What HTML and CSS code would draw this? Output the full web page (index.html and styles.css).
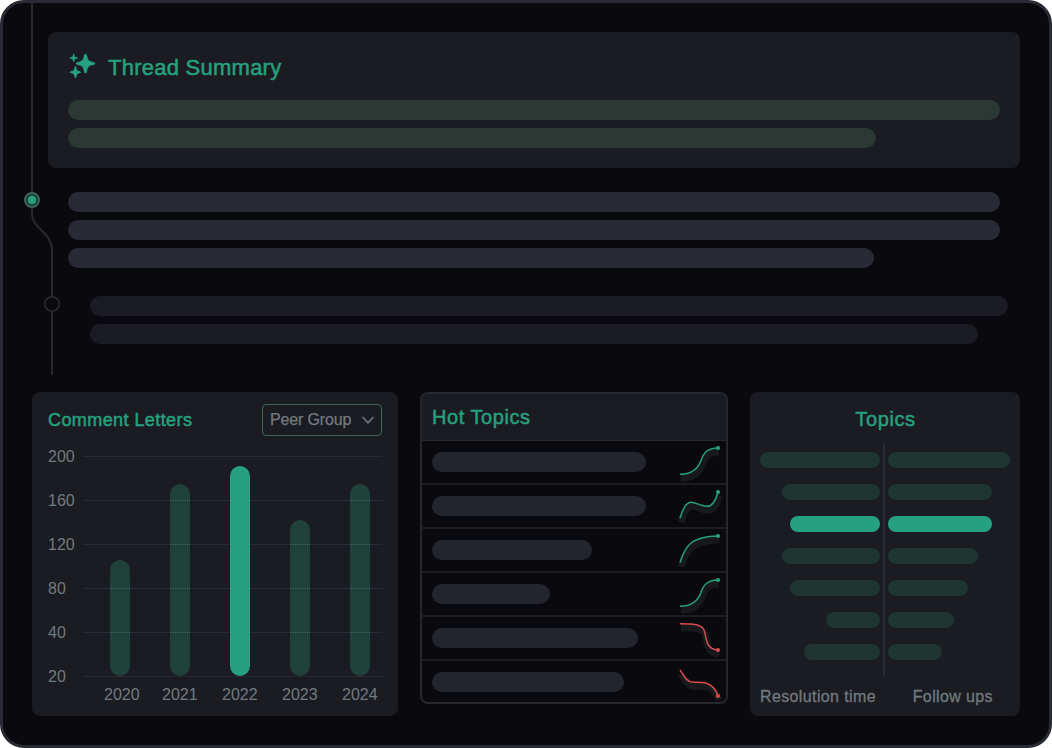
FILE: index.html
```html
<!DOCTYPE html>
<html lang="en">
  <head>
    <meta charset="UTF-8">
    <meta name="viewport" content="width=device-width, initial-scale=1.0">
    <title>Thread Summary</title>
    <link rel="stylesheet" href="styles.css">
  </head>
  <body>
    <div class="frame">
      <!-- timeline running down the left of the thread -->
      <svg class="rail" width="40" height="373" viewBox="21 3 40 373">
        <path class="rail-line" d="M32 3V214C32 229 52 232 52 250V375"/>
        <circle class="node-ring" cx="32" cy="200" r="7"/>
        <circle class="node-dot" cx="32" cy="200" r="4.2"/>
        <circle class="node-empty" cx="52" cy="304" r="7.2"/>
      </svg>

      <section class="summary">
        <h1>
          <svg class="sparkles" width="28" height="28" viewBox="0 0 28 28">
            <path d="M17.5 2C18.3 2 18.7 2.8 18.9 3.8C19.6 7.6 20.4 9 24 9.9C25.6 10.2 27 10.6 27 11.5C27 12.4 25.6 12.8 24 13.1C20.4 14 19.6 15.4 18.9 19.2C18.7 20.2 18.3 21 17.5 21C16.7 21 16.3 20.2 16.1 19.2C15.4 15.4 14.6 14 11 13.1C9.4 12.8 8 12.4 8 11.5C8 10.6 9.4 10.2 11 9.9C14.6 9 15.4 7.6 16.1 3.8C16.3 2.8 16.7 2 17.5 2Z"/>
            <path d="M5.7 1.7C6.4 1.7 6.2 4.4 6.9 4.9C7.4 5.4 9.8 5.2 9.8 5.9C9.8 6.6 7.4 6.4 6.9 6.9C6.2 7.5 6.4 9.8 5.7 9.8C5 9.8 5.2 7.5 4.5 6.9C4 6.4 1.8 6.6 1.8 5.9C1.8 5.2 4 5.4 4.5 4.9C5.2 4.4 5 1.7 5.7 1.7Z"/>
            <path d="M7.5 14.3C8.5 14.3 8.3 17.6 9.3 18.5C10.2 19.4 13 19.3 13 20.2C13 21.1 10.2 21 9.3 21.9C8.3 22.8 8.5 26 7.5 26C6.5 26 6.7 22.8 5.7 21.9C4.8 21 1.8 21.1 1.8 20.2C1.8 19.3 4.8 19.4 5.7 18.5C6.7 17.6 6.5 14.3 7.5 14.3Z"/>
          </svg>
          <span>Thread Summary</span>
        </h1>
        <div class="line w-932"></div>
        <div class="line w-808"></div>
      </section>

      <section class="post">
        <div class="line w-932"></div>
        <div class="line w-932"></div>
        <div class="line w-806"></div>
      </section>

      <section class="post reply">
        <div class="line w-918"></div>
        <div class="line w-888"></div>
      </section>

      <div class="panels">
        <section class="panel letters">
          <header>
            <h2>Comment Letters</h2>
            <button class="select" type="button">
              <span>Peer Group</span>
              <svg width="14" height="8" viewBox="0 0 14 8"><path d="M1.5 1L7 6.8L12.5 1"/></svg>
            </button>
          </header>
          <div class="chart">
            <div class="y-axis">
              <span>200</span><span>160</span><span>120</span><span>80</span><span>40</span><span>20</span>
            </div>
            <div class="plot">
              <div class="bar" style="height: 116px"></div>
              <div class="bar" style="height: 192px"></div>
              <div class="bar active" style="height: 210px"></div>
              <div class="bar" style="height: 156px"></div>
              <div class="bar" style="height: 192px"></div>
            </div>
          </div>
          <div class="x-axis">
            <span>2020</span><span>2021</span><span>2022</span><span>2023</span><span>2024</span>
          </div>
        </section>

        <section class="hot">
          <h2>Hot Topics</h2>
          <div class="row">
            <div class="line w-214"></div>
            <svg class="spark" width="50" height="42"><path class="glow" d="M4 34.3C15 34.3 21.5 30 25 20.5C27.5 13 31 8.2 42 8"/><path d="M4 34.3C15 34.3 21.5 30 25 20.5C27.5 13 31 8.2 42 8"/><circle cx="42" cy="8" r="2.1"/></svg>
          </div>
          <div class="row">
            <div class="line w-214"></div>
            <svg class="spark" width="50" height="42"><path class="glow" d="M4 34.3C7 24 10 18.3 15 18.3C20 18.3 25 22.3 31 22.3C36 22.3 40 16 42 8"/><path d="M4 34.3C7 24 10 18.3 15 18.3C20 18.3 25 22.3 31 22.3C36 22.3 40 16 42 8"/><circle cx="42" cy="8" r="2.1"/></svg>
          </div>
          <div class="row">
            <div class="line w-160"></div>
            <svg class="spark" width="50" height="42"><path class="glow" d="M4 34.7C9 18 15 8.5 42 8"/><path d="M4 34.7C9 18 15 8.5 42 8"/><circle cx="42" cy="8" r="2.1"/></svg>
          </div>
          <div class="row">
            <div class="line w-118"></div>
            <svg class="spark" width="50" height="42"><path class="glow" d="M4 34.3C15 34.3 21.5 30 25 20.5C27.5 13 31 8.2 42 8"/><path d="M4 34.3C15 34.3 21.5 30 25 20.5C27.5 13 31 8.2 42 8"/><circle cx="42" cy="8" r="2.1"/></svg>
          </div>
          <div class="row">
            <div class="line w-206"></div>
            <svg class="spark down" width="50" height="42"><path class="glow" d="M4 7.8C18 7.8 25 8.5 27.5 13C31 19 28 33.5 42 34"/><path d="M4 7.8C18 7.8 25 8.5 27.5 13C31 19 28 33.5 42 34"/><circle cx="42" cy="34" r="2.1"/></svg>
          </div>
          <div class="row">
            <div class="line w-192"></div>
            <svg class="spark down" width="50" height="42"><path class="glow" d="M4 10C8 16 11 22.3 17 22.3C22 22.5 25 22 30 23C36 25 40 30 42 36"/><path d="M4 10C8 16 11 22.3 17 22.3C22 22.5 25 22 30 23C36 25 40 30 42 36"/><circle cx="42" cy="36" r="2.1"/></svg>
          </div>
        </section>

        <section class="panel topics">
          <h2>Topics</h2>
          <div class="compare">
            <div class="side left">
              <div style="width: 120px"></div>
              <div style="width: 98px"></div>
              <div class="active" style="width: 90px"></div>
              <div style="width: 98px"></div>
              <div style="width: 90px"></div>
              <div style="width: 54px"></div>
              <div style="width: 76px"></div>
            </div>
            <div class="axis"></div>
            <div class="side">
              <div style="width: 122px"></div>
              <div style="width: 104px"></div>
              <div class="active" style="width: 104px"></div>
              <div style="width: 90px"></div>
              <div style="width: 80px"></div>
              <div style="width: 66px"></div>
              <div style="width: 54px"></div>
            </div>
          </div>
          <footer>
            <span>Resolution time</span>
            <span>Follow ups</span>
          </footer>
        </section>
      </div>
    </div>
  </body>
</html>
```
FILE: styles.css
```css
:root {
    --bg: #0a090e;
    --panel: #1b1c21;
    --border: #282b33;
    --green: #26a17f;
    --muted: #717a80;
}
* {
    box-sizing: border-box;
}
body {
    margin: 0;
    background: #fff;
    font-family: "Liberation Sans", Arial, sans-serif;
    font-size: 16px;
}
h1, h2 {
    margin: 0;
    color: var(--green);
    font-weight: normal;
    -webkit-text-stroke: 0.5px var(--green);
}
.frame {
    position: relative;
    width: 1052px;
    height: 748px;
    padding: 29px;
    background: var(--bg);
    border: 3px solid var(--border);
    border-radius: 24px;
}

/* timeline */
.rail {
    position: absolute;
    left: 18px;
    top: 0;
}
.rail-line {
    fill: none;
    stroke: #282930;
    stroke-width: 2;
}
.node-ring {
    fill: #1f3b35;
    stroke: #3b6458;
    stroke-width: 2;
}
.node-dot {
    fill: var(--green);
}
.node-empty {
    fill: var(--bg);
    stroke: #282930;
    stroke-width: 1.7;
}

/* thread */
.line {
    height: 20px;
    border-radius: 10px;
    background: #282b33;
}
.line + .line {
    margin-top: 8px;
}
.summary {
    height: 136px;
    margin-left: 16px;
    padding: 20px;
    background: var(--panel);
    border-radius: 8px;
}
.summary h1 {
    display: flex;
    align-items: center;
    gap: 12px;
    height: 32px;
    margin-bottom: 16px;
    font-size: 22px;
    line-height: 32px;
    letter-spacing: 0.25px;
}
.sparkles {
    margin-top: -4px;
    fill: var(--green);
    stroke: var(--green);
    stroke-width: 0.4;
}
.summary .line {
    background: #2b3833;
}
.post {
    margin: 24px 0 0 36px;
}
.reply {
    margin: 28px 0 0 58px;
}
.reply .line {
    background: #1b1b23;
}
.w-932 { width: 932px; }
.w-918 { width: 918px; }
.w-888 { width: 888px; }
.w-808 { width: 808px; }
.w-806 { width: 806px; }
.w-214 { width: 214px; }
.w-206 { width: 206px; }
.w-192 { width: 192px; }
.w-160 { width: 160px; }
.w-118 { width: 118px; }

/* bottom panels */
.panels {
    display: grid;
    grid-template-columns: 366px 308px 270px;
    align-items: start;
    gap: 22px;
    margin-top: 48px;
}
.panel {
    height: 324px;
    background: var(--panel);
    border-radius: 8px;
}

/* comment letters */
.letters {
    padding: 12px 16px;
}
.letters header {
    display: flex;
    align-items: center;
    justify-content: space-between;
    height: 32px;
}
.letters h2 {
    font-size: 18px;
    letter-spacing: 0.42px;
}
.select {
    display: flex;
    align-items: center;
    justify-content: space-between;
    width: 120px;
    height: 32px;
    padding: 0 6px 0 7px;
    background: none;
    border: 1px solid #3b6458;
    border-radius: 4px;
    color: var(--muted);
    font: inherit;
    letter-spacing: -0.15px;
    -webkit-text-stroke: 0.25px var(--muted);
}
.select svg {
    fill: none;
    stroke: var(--muted);
    stroke-width: 1.5;
}
.chart {
    display: flex;
    height: 232px;
    margin-top: 9px;
    color: var(--muted);
}
.y-axis {
    width: 35px;
}
.y-axis span {
    display: block;
    height: 44px;
    line-height: 24px;
}
.plot {
    display: flex;
    align-items: flex-end;
    gap: 40px;
    width: 299px;
    height: 221px;
    margin-top: 11px;
    padding: 0 0 1px 27px;
    background: repeating-linear-gradient(#282a31 0 1px, transparent 1px 44px);
}
.bar {
    width: 20px;
    border-radius: 10px;
    background:
        repeating-linear-gradient(90deg, #1f413a 0 1px, transparent 1px 2px),
        repeating-linear-gradient(to top, #1f413a 0 43px, #46665e 43px 44px);
}
.bar.active {
    background: var(--green);
}
.x-axis {
    display: flex;
    gap: 24px;
    margin: 6px 0 0 56px;
    line-height: 24px;
    color: var(--muted);
}
.x-axis span {
    width: 36px;
    white-space: nowrap;
}
.x-axis span:first-child {
    margin-right: -2px;
}

/* hot topics */
.hot {
    height: 312px;
    border: 2px solid #25272f;
    border-radius: 8px;
    overflow: hidden;
}
.hot h2 {
    height: 47px;
    padding-left: 10px;
    background: var(--panel);
    border-bottom: 1px solid #25272f;
    font-size: 20px;
    line-height: 47px;
    letter-spacing: 0.55px;
}
.row {
    display: flex;
    align-items: center;
    justify-content: space-between;
    height: 44px;
    padding-left: 10px;
    border-bottom: 2px solid #1c1d23;
}
.row:last-child {
    height: 42px;
    border-bottom: 0;
}
.row .line {
    background: #22252c;
}
.spark {
    flex: none;
    align-self: flex-start;
    margin-top: -1px;
    fill: none;
    stroke: var(--green);
    stroke-width: 1.5;
}
.spark circle {
    fill: var(--green);
    stroke: none;
}
.spark .glow {
    stroke: #17191d;
    stroke-width: 7;
    transform: translate(1px, 4px);
}
.spark.down {
    stroke: #d84c4c;
}
.spark.down circle {
    fill: #d84c4c;
}

/* topics */
.topics {
    padding: 12px 8px 0 10px;
}
.topics h2 {
    padding-right: 1px;
    font-size: 20px;
    line-height: 30px;
    letter-spacing: 0.6px;
    text-align: center;
}
.compare {
    display: flex;
    margin-top: 9px;
    height: 232px;
}
.side {
    display: flex;
    flex-direction: column;
    gap: 16px;
    width: 122px;
    padding-top: 9px;
}
.side.left {
    align-items: flex-end;
    width: 120px;
}
.side div {
    height: 16px;
    border-radius: 8px;
    background: #1f3532;
}
.side .active {
    background: var(--green);
}
.axis {
    width: 2px;
    margin: 0 3px;
    background: #2a2b33;
}
.topics footer {
    display: flex;
    justify-content: space-between;
    margin-top: 10px;
    padding-right: 19px;
    line-height: 24px;
    letter-spacing: 0.38px;
    color: var(--muted);
    -webkit-text-stroke: 0.3px var(--muted);
}
```
